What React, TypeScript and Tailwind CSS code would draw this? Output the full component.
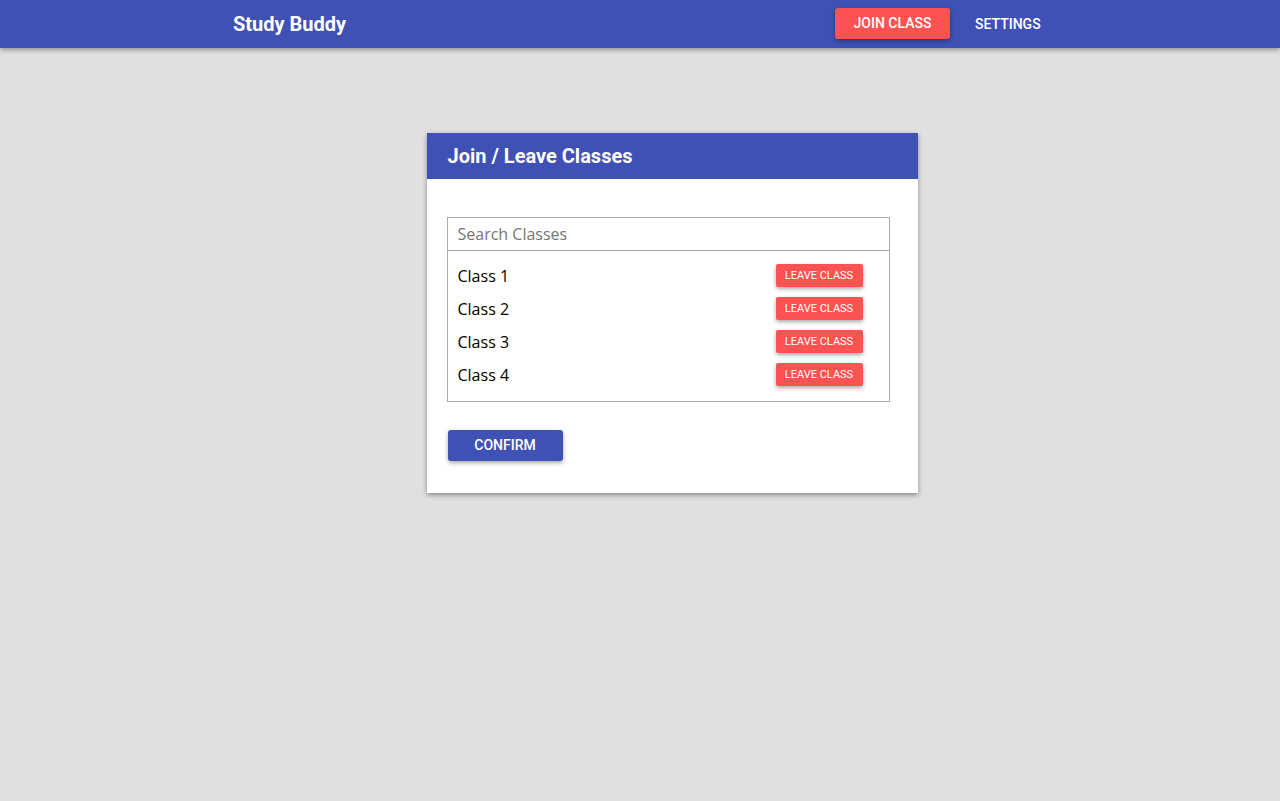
export default function App() {
  const classes = ["Class 1", "Class 2", "Class 3", "Class 4"];
  return (
    <div className="min-h-[801px] bg-[#e0e0e0]" style={{ fontFamily: "Roboto, 'Liberation Sans', sans-serif" }}>
      <header className="h-12 bg-[#3f51b5] shadow-[0_2px_5px_rgba(0,0,0,0.35)] flex items-center pl-[233px] pr-[239px] relative z-10">
        <div className="text-white text-[20px] font-bold flex-1 leading-none">Study Buddy</div>
        <div className="flex items-center">
          <button className="bg-[#ff5252] text-white text-[14px] font-medium w-[115px] h-[31px] rounded-[3px] shadow-[0_2px_4px_rgba(0,0,0,0.35)] mb-[1px]">
            JOIN CLASS
          </button>
          <button className="text-white text-[14px] font-medium ml-[25px] w-[66px] text-left">SETTINGS</button>
        </div>
      </header>
      <div className="flex justify-center pt-[85px] pl-[64px]">
        <div className="w-[491px] bg-white shadow-[0_2px_5px_rgba(0,0,0,0.4)]">
          <div className="h-[46px] bg-[#3f51b5] flex items-center pl-[21px] text-white text-[20px] font-bold">
            Join / Leave Classes
          </div>
          <div className="pt-[38px] pl-[20px] pr-[28px] pb-[32px]">
            <div className="border border-[#aaaaaa]">
              <div className="h-[33px] border-b border-[#aaaaaa] flex items-center pl-[10px] text-[16px] text-[#757575]" style={{ fontFamily: "'Open Sans', 'Noto Sans', sans-serif" }}>
                Search Classes
              </div>
              <div className="pt-[8px] pb-[10px] pl-[10px] pr-[26px]">
                {classes.map((c) => (
                  <div key={c} className="h-[33px] flex items-center justify-between">
                    <span className="text-[16px] text-black" style={{ fontFamily: "'Open Sans', 'Noto Sans', sans-serif" }}>{c}</span>
                    <button className="bg-[#ff5252] text-white text-[11px] font-normal w-[87px] h-[23px] pt-[1px] rounded-[2px] shadow-[0_2px_4px_rgba(0,0,0,0.35)]">
                      LEAVE CLASS
                    </button>
                  </div>
                ))}
              </div>
            </div>
            <button className="mt-[28px] ml-[1px] bg-[#3f51b5] text-white text-[14px] font-medium w-[115px] h-[31px] rounded-[3px] shadow-[0_2px_4px_rgba(0,0,0,0.35)]">
              CONFIRM
            </button>
          </div>
        </div>
      </div>
    </div>
  );
}
